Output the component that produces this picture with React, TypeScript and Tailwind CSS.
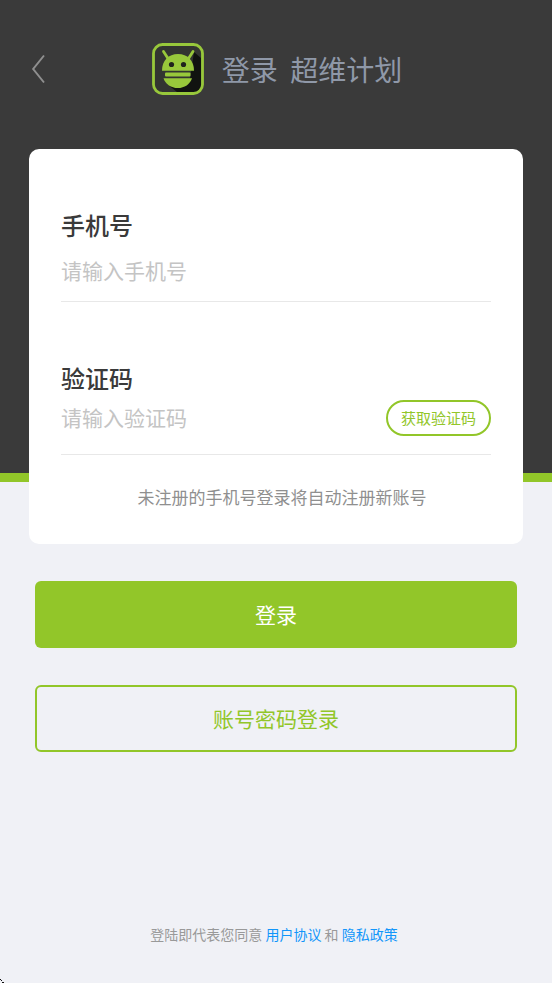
import React from "react";

function BackIcon() {
  return (
    <svg viewBox="0 0 16 30" className="h-[30px] w-4" fill="none" stroke="#8f8f8f" strokeWidth="2" aria-hidden="true">
      <path d="M13 1.5 2.2 15 13 28.5" />
    </svg>
  );
}

function Logo() {
  return (
    <svg viewBox="0 0 52 52" className="h-[52px] w-[52px] shrink-0" aria-hidden="true">
      <rect x="1" y="1" width="50" height="50" rx="9" fill="#333531" />
      <path d="M42 9 49 15V42Q49 49 42 49H25L15 41 38 36Z" fill="#111310" />
      <rect x="1.5" y="1.5" width="49" height="49" rx="9" fill="none" stroke="#98c83b" strokeWidth="2.8" />
      <path d="m11.500 8.500 4.500 7M41 8.500l-4.500 7" stroke="#98c83b" strokeWidth="2.800" strokeLinecap="round" />
      <path d="M10 27.700C10 17.500 16.500 11 26 11s16 6.500 16 16.700Z" fill="#98c83b" />
      <circle cx="19.500" cy="21.500" r="2.600" fill="#20231d" />
      <circle cx="31.500" cy="21.500" r="2.600" fill="#20231d" />
      <rect x="13" y="29.400" width="25.500" height="4" rx="1" fill="#98c83b" />
      <path d="M11.500 35.200h28.500c-2 6-7.500 9.800-14.200 9.800S13.500 41.200 11.500 35.200Z" fill="#98c83b" />
    </svg>
  );
}

export default function App() {
  return (
    <div className="relative flex min-h-screen flex-col bg-[#f0f1f6] font-['Noto_Sans_CJK_SC',sans-serif]">
      <header className="border-b-[9px] border-[#92c629] bg-[#3a3a3a] px-[29px]">
        <div className="grid h-[149px] grid-cols-[16px_1fr_16px] items-center pb-[11px] pl-0.5">
          <button type="button" aria-label="返回" className="cursor-pointer">
            <BackIcon />
          </button>
          <div className="flex items-center justify-center gap-[18px]">
            <Logo />
            <h1 className="whitespace-pre text-[28px] leading-10 text-[#8f98a8]">登录  超维计划</h1>
          </div>
        </div>

        <form id="login" className="-mb-[71px] rounded-[10px] bg-white px-8 pt-[58px] pb-[35px]">
          <label htmlFor="phone" className="block h-9 text-2xl leading-9 font-medium text-[#3a3a3a]">
            手机号
          </label>
          <div className="mb-[58px] border-b border-[#e8e8e8]">
            <input
              id="phone"
              type="tel"
              placeholder="请输入手机号"
              className="block h-[58px] w-full bg-transparent pb-1 text-[21px] text-[#3a3a3a] outline-none placeholder:text-[#c4c4c4]"
            />
          </div>

          <label htmlFor="code" className="block h-9 text-2xl leading-9 font-medium text-[#3a3a3a]">
            验证码
          </label>
          <div className="flex items-center border-b border-[#e8e8e8] pb-3.5">
            <input
              id="code"
              type="text"
              placeholder="请输入验证码"
              className="block h-11 min-w-0 flex-1 bg-transparent pb-0.5 text-[21px] text-[#3a3a3a] outline-none placeholder:text-[#c4c4c4]"
            />
            <button
              type="button"
              className="h-9 w-[105px] shrink-0 cursor-pointer rounded-full border-2 border-[#92c629] text-[15px] leading-6 text-[#92c629]"
            >
              获取验证码
            </button>
          </div>
          <p className="mt-[30px] pl-3 text-center text-[17px] leading-6 text-[#8f8f8f]">
            未注册的手机号登录将自动注册新账号
          </p>
        </form>
      </header>

      <main className="flex flex-col gap-[37px] px-[35px] pt-[99px]">
        <button
          type="submit"
          form="login"
          className="h-[67px] w-full cursor-pointer rounded-md bg-[#92c629] text-[21px] text-white"
        >
          登录
        </button>
        <button
          type="button"
          className="h-[67px] w-full cursor-pointer rounded-md border-2 border-[#92c629] text-[21px] text-[#92c629]"
        >
          账号密码登录
        </button>
      </main>

      <footer className="mt-auto pt-10 pr-1 pb-[39px] text-center text-sm leading-5 text-[#999999]">
        登陆即代表您同意{" "}
        <a href="#terms" className="text-[#1296fa]">用户协议</a> 和{" "}
        <a href="#privacy" className="text-[#1296fa]">隐私政策</a>
      </footer>

      <svg viewBox="0 0 4 4" className="absolute bottom-0 left-0 h-1 w-1" aria-hidden="true">
        <path d="M0 0h1v1H0zM1 1h1v1H1zM2 3h2v1H2z" fill="#111111" />
      </svg>
    </div>
  );
}
